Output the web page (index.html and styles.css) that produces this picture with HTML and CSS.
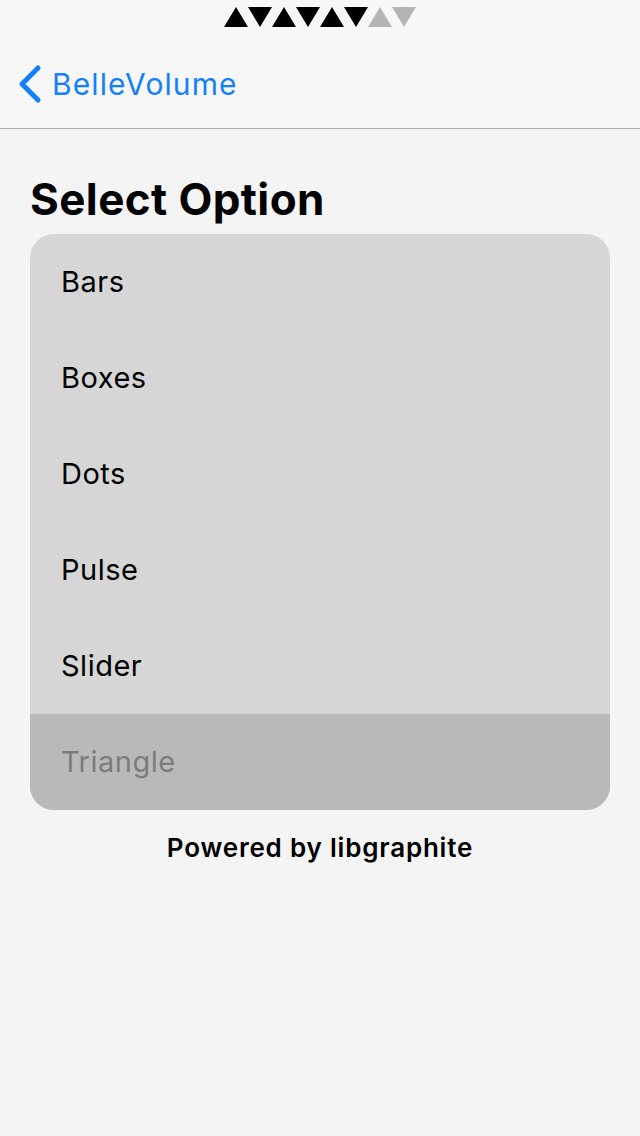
FILE: index.html
```html
<!DOCTYPE html>
<html lang="en">
<head>
    <meta charset="UTF-8">
    <meta name="viewport" content="width=device-width, initial-scale=1.0">
    <title>Select Option</title>
    <link rel="stylesheet" href="styles.css">
</head>
<body>
    <div class="status-bar">
        <!-- signal triangles -->
        <svg class="signal" width="192" height="20" viewBox="0 0 192 20">
            <polygon points="0,20 12,0 24,20" fill="#000"/>
            <polygon points="24,0 48,0 36,20" fill="#000"/>
            <polygon points="48,20 60,0 72,20" fill="#000"/>
            <polygon points="72,0 96,0 84,20" fill="#000"/>
            <polygon points="96,20 108,0 120,20" fill="#000"/>
            <polygon points="120,0 144,0 132,20" fill="#000"/>
            <polygon points="144,20 156,0 168,20" fill="#b5b5b5"/>
            <polygon points="168,0 192,0 180,20" fill="#b5b5b5"/>
        </svg>
    </div>
    <div class="nav-bar">
        <a class="back" href="#">
            <svg width="28" height="40" viewBox="0 0 28 40">
                <polyline points="24,4 8,20 24,36" fill="none" stroke="#157efb" stroke-width="5" stroke-linecap="round" stroke-linejoin="round"/>
            </svg>
            <span>BelleVolume</span>
        </a>
    </div>
    <div class="content">
        <h1>Select Option</h1>
        <ul class="options">
            <li>Bars</li>
            <li>Boxes</li>
            <li>Dots</li>
            <li>Pulse</li>
            <li>Slider</li>
            <li class="selected">Triangle</li>
        </ul>
        <p class="footer">Powered by libgraphite</p>
    </div>
</body>
</html>
```

FILE: styles.css
```css
body {
    margin: 0;
    background-color: #f4f4f4;
    font-family: Inter, "Noto Sans", sans-serif;
    color: #000;
}
.status-bar {
    height: 40px;
    background-color: #f7f7f7;
    display: flex;
    justify-content: center;
    align-items: flex-start;
}
.signal {
    margin-top: 7px;
}
.nav-bar {
    height: 88px;
    background-color: #f7f7f7;
    border-bottom: 1px solid #b2b2b2;
    display: flex;
    align-items: center;
}
.back {
    display: flex;
    align-items: center;
    gap: 10px;
    margin-left: 14px;
    color: #157efb;
    text-decoration: none;
    font-size: 30px;
    letter-spacing: 1.1px;
}
.content {
    padding: 0 30px;
}
h1 {
    margin: 45px 0 10px;
    font-size: 44px;
    line-height: 50px;
    font-weight: 700;
    letter-spacing: 0.4px;
}
.options {
    list-style: none;
    margin: 0;
    padding: 0;
    border-radius: 24px;
    overflow: hidden;
    background-color: #d6d6d6;
}
.options li {
    height: 96px;
    line-height: 96px;
    padding-left: 31px;
    font-size: 29px;
    letter-spacing: 0.5px;
}
.options li.selected {
    background-color: #b9b9b9;
    color: #7c7c7c;
}
.footer {
    margin: 22px 0 0;
    text-align: center;
    font-size: 26px;
    line-height: 32px;
    font-weight: 600;
    letter-spacing: 0.8px;
}
```
